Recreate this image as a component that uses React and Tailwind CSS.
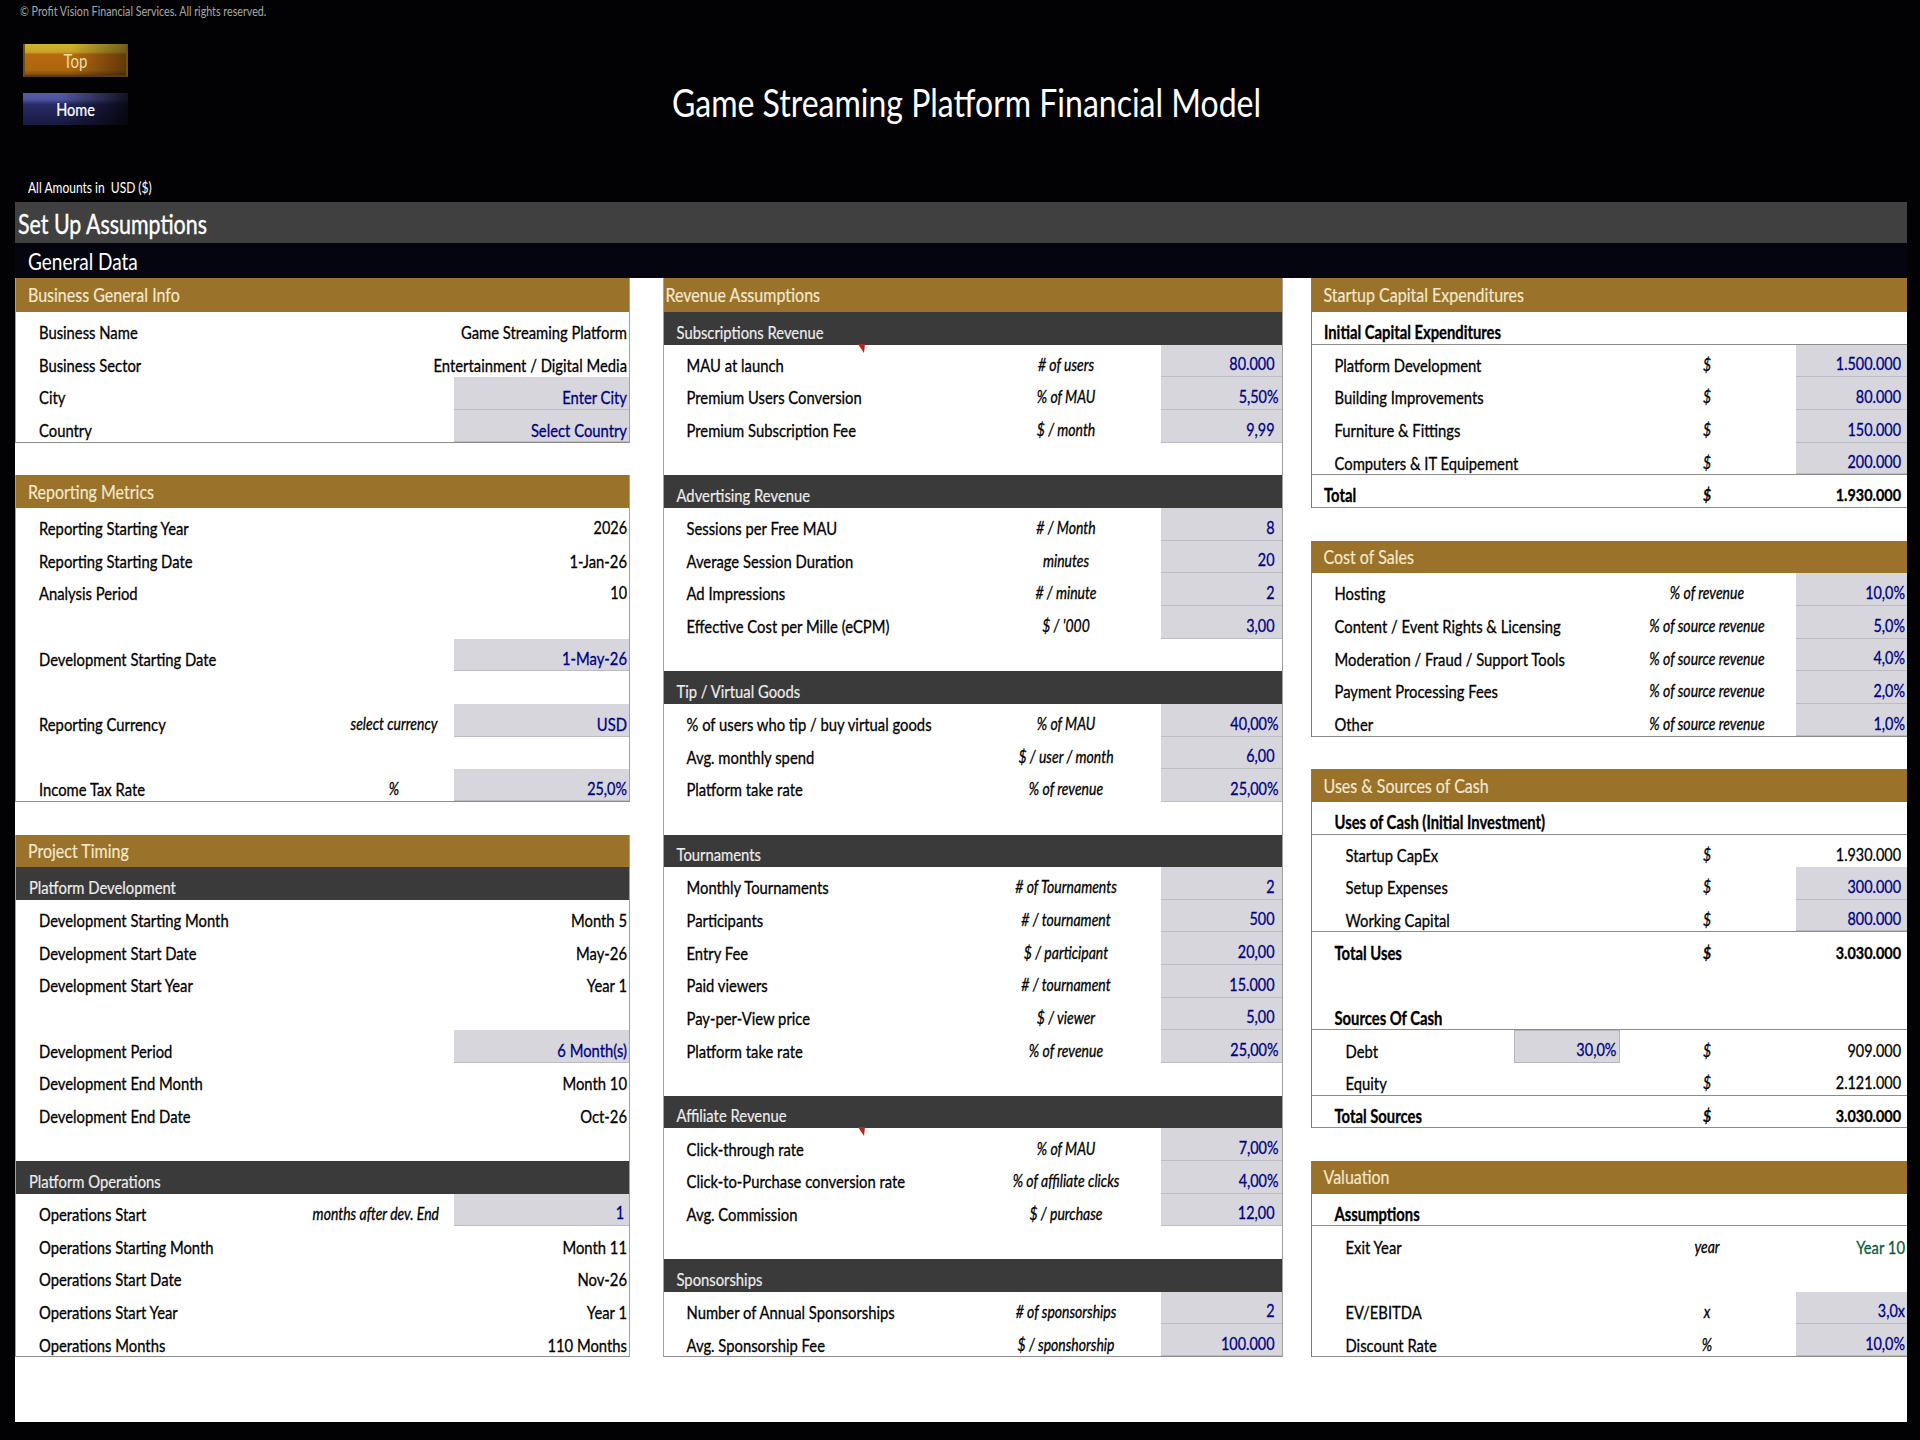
const FONT = "font-['Lato','Noto_Sans',sans-serif]";

const leftCols = { unit: "w-[90px] mr-[14.5px]", value: "w-[175.5px]", pad: "pr-[2px]", tight: "pr-[2px]" };
const midCols = { unit: "w-[100px] mr-[45px]", value: "w-[120.5px]", pad: "pr-[7px]", tight: "pr-[3px]" };
const rightCols = { unit: "w-[100px] mr-[38.5px]", value: "w-[111.5px]", pad: "pr-[6px]", tight: "pr-[2px]" };

const leftSections = [
  [
    { type: "gold", text: "Business General Info", first: true },
    { label: "Business Name", value: "Game Streaming Platform", tight: true },
    { label: "Business Sector", value: "Entertainment / Digital Media", tight: true },
    { label: "City", value: "Enter City", input: true },
    { label: "Country", value: "Select Country", input: true, line: true },
  ],
  [
    { type: "gold", text: "Reporting Metrics" },
    { label: "Reporting Starting Year", value: "2026" },
    { label: "Reporting Starting Date", value: "1-Jan-26" },
    { label: "Analysis Period", value: "10" },
    { type: "blank" },
    { label: "Development Starting Date", value: "1-May-26", input: true },
    { type: "blank" },
    { label: "Reporting Currency", unit: "select currency", value: "USD", input: true },
    { type: "blank" },
    { label: "Income Tax Rate", unit: "%", value: "25,0%", input: true, line: true },
  ],
  [
    { type: "gold", text: "Project Timing" },
    { type: "dark", text: "Platform Development" },
    { label: "Development Starting Month", value: "Month 5" },
    { label: "Development Start Date", value: "May-26" },
    { label: "Development Start Year", value: "Year 1" },
    { type: "blank" },
    { label: "Development Period", value: "6 Month(s)", input: true },
    { label: "Development End Month", value: "Month 10" },
    { label: "Development End Date", value: "Oct-26" },
    { type: "blank" },
    { type: "dark", text: "Platform Operations" },
    { label: "Operations Start", unit: "months after dev. End", unitEnd: true, value: "1", input: true, pad: "pr-[5px]" },
    { label: "Operations Starting Month", value: "Month 11" },
    { label: "Operations Start Date", value: "Nov-26" },
    { label: "Operations Start Year", value: "Year 1" },
    { label: "Operations Months", value: "110 Months", line: true },
  ],
];

const midSections = [
  [
    { type: "gold", text: "Revenue Assumptions", first: true, cls: "pl-[2px]" },
    { type: "dark", text: "Subscriptions Revenue" },
    { label: "MAU at launch", unit: "# of users", value: "80.000", input: true, comment: true },
    { label: "Premium Users Conversion", unit: "% of MAU", value: "5,50%", input: true },
    { label: "Premium Subscription Fee", unit: "$ / month", value: "9,99", input: true },
    { type: "blank" },
    { type: "dark", text: "Advertising Revenue" },
    { label: "Sessions per Free MAU", unit: "# / Month", value: "8", input: true },
    { label: "Average Session Duration", unit: "minutes", value: "20", input: true },
    { label: "Ad Impressions", unit: "# / minute", value: "2", input: true },
    { label: "Effective Cost per Mille (eCPM)", unit: "$ / '000", value: "3,00", input: true },
    { type: "blank" },
    { type: "dark", text: "Tip / Virtual Goods" },
    { label: "% of users who tip / buy virtual goods", unit: "% of MAU", value: "40,00%", input: true },
    { label: "Avg. monthly spend", unit: "$ / user / month", value: "6,00", input: true },
    { label: "Platform take rate", unit: "% of revenue", value: "25,00%", input: true },
    { type: "blank" },
    { type: "dark", text: "Tournaments" },
    { label: "Monthly Tournaments", unit: "# of Tournaments", value: "2", input: true },
    { label: "Participants", unit: "# / tournament", value: "500", input: true },
    { label: "Entry Fee", unit: "$ / participant", value: "20,00", input: true },
    { label: "Paid viewers", unit: "# / tournament", value: "15.000", input: true },
    { label: "Pay-per-View price", unit: "$ / viewer", value: "5,00", input: true },
    { label: "Platform take rate", unit: "% of revenue", value: "25,00%", input: true },
    { type: "blank" },
    { type: "dark", text: "Affiliate Revenue" },
    { label: "Click-through rate", unit: "% of MAU", value: "7,00%", input: true, comment: true },
    { label: "Click-to-Purchase conversion rate", unit: "% of affiliate clicks", value: "4,00%", input: true },
    { label: "Avg. Commission", unit: "$ / purchase", value: "12,00", input: true },
    { type: "blank" },
    { type: "dark", text: "Sponsorships" },
    { label: "Number of Annual Sponsorships", unit: "# of sponsorships", value: "2", input: true },
    { label: "Avg. Sponsorship Fee", unit: "$ / sponshorship", value: "100.000", input: true, line: true },
  ],
];

const rightSections = [
  [
    { type: "gold", text: "Startup Capital Expenditures", first: true },
    { label: "Initial Capital Expenditures", bold: true, labelCls: "pl-[12.5px]", line: true },
    { label: "Platform Development", unit: "$", value: "1.500.000", input: true },
    { label: "Building Improvements", unit: "$", value: "80.000", input: true },
    { label: "Furniture & Fittings", unit: "$", value: "150.000", input: true },
    { label: "Computers & IT Equipement", unit: "$", value: "200.000", input: true, line: true },
    { label: "Total", unit: "$", value: "1.930.000", bold: true, labelCls: "pl-[12.5px]", line: true },
  ],
  [
    { type: "gold", text: "Cost of Sales" },
    { label: "Hosting", unit: "% of revenue", value: "10,0%", input: true },
    { label: "Content / Event Rights & Licensing", unit: "% of source revenue", value: "5,0%", input: true },
    { label: "Moderation / Fraud / Support Tools", unit: "% of source revenue", value: "4,0%", input: true },
    { label: "Payment Processing Fees", unit: "% of source revenue", value: "2,0%", input: true },
    { label: "Other", unit: "% of source revenue", value: "1,0%", input: true, line: true },
  ],
  [
    { type: "gold", text: "Uses & Sources of Cash" },
    { label: "Uses of Cash (Initial Investment)", bold: true, line: true },
    { label: "Startup CapEx", unit: "$", value: "1.930.000", labelCls: "pl-[34px]" },
    { label: "Setup Expenses", unit: "$", value: "300.000", input: true, labelCls: "pl-[34px]" },
    { label: "Working Capital", unit: "$", value: "800.000", input: true, labelCls: "pl-[34px]", line: true },
    { label: "Total Uses", unit: "$", value: "3.030.000", bold: true },
    { type: "blank" },
    { label: "Sources Of Cash", bold: true, line: true },
    { label: "Debt", extra: "30,0%", unit: "$", value: "909.000", labelCls: "pl-[34px]" },
    { label: "Equity", unit: "$", value: "2.121.000", labelCls: "pl-[34px]", line: true },
    { label: "Total Sources", unit: "$", value: "3.030.000", bold: true, line: true },
  ],
  [
    { type: "gold", text: "Valuation" },
    { label: "Assumptions", bold: true, line: true },
    { label: "Exit Year", unit: "year", value: "Year 10", green: true, labelCls: "pl-[34px]", tight: true },
    { type: "blank" },
    { label: "EV/EBITDA", unit: "x", value: "3,0x", input: true, labelCls: "pl-[34px]" },
    { label: "Discount Rate", unit: "%", value: "10,0%", input: true, labelCls: "pl-[34px]", line: true },
  ],
];

// the source screenshot is stretched vertically, so text gets the same stretch
const Tall = ({ children, className = "" }) => (
  <span className={`inline-block scale-y-[1.22] whitespace-nowrap ${className}`}>{children}</span>
);

function Row({ row, cols }) {
  if (row.type === "blank") return <div className="h-[32.66px]" />;
  if (row.type === "gold") {
    return (
      <div className={`flex items-center bg-[#9a7229] text-[#f3e9cf] text-[16px] leading-[20px] [-webkit-text-stroke:0.15px_#f3e9cf] ${row.first ? "h-[34px]" : "h-[32.66px]"} ${row.cls || "pl-[12px]"}`}>
        <Tall>{row.text}</Tall>
      </div>
    );
  }
  if (row.type === "dark") {
    return (
      <div className="flex items-end pb-[3px] h-[32.66px] bg-[#3a3a3a] text-[#eeeeee] text-[14.8px] leading-[20px] pl-[13px] [-webkit-text-stroke:0.15px_#eeeeee]">
        <Tall>{row.text}</Tall>
      </div>
    );
  }
  const tight = row.tight || /[%x]$/.test(row.value || "");
  const pad = row.pad || (tight ? cols.tight : cols.pad);
  const weight = row.bold ? "font-bold" : "";
  const numeric = /^[\d.,%x]+$/.test(row.value || "");
  const labelPb = row.line ? "pb-[1.5px]" : "pb-[2.5px]";
  const valuePb = row.input ? (row.line ? "pb-[1px]" : "pb-[2px]") : labelPb;
  return (
    <div className={`relative flex h-[32.66px] text-black text-[14.8px] leading-[20px] [-webkit-text-stroke:0.25px_currentColor] ${row.line ? "border-b border-[#8c8c8c]" : ""}`}>
      {row.comment && (
        <svg className="absolute left-[194px] -top-[1px]" width="8" height="10" viewBox="0 0 8 10">
          <polygon points="0,0 7,0 6,9" fill="#b3261e" />
        </svg>
      )}
      <div className={`flex-1 min-w-0 flex items-end ${labelPb} ${weight} ${row.labelCls || "pl-[23px]"}`}>
        <Tall>{row.label}</Tall>
      </div>
      {row.extra && (
        <div className="w-[106px] mr-[37.5px] flex items-end justify-end pb-[2px] pr-[2px] bg-[#d6d6dc] border border-[#b5b5bb] text-[#000080] text-[14.5px]">
          <Tall>{row.extra}</Tall>
        </div>
      )}
      <div className={`${cols.unit} flex items-end ${labelPb} italic text-[14px] ${row.unitEnd ? "justify-end" : "justify-center"} ${weight}`}>
        <Tall>{row.unit}</Tall>
      </div>
      <div
        className={`${cols.value} flex items-end justify-end ${valuePb} ${pad} ${weight} ${numeric ? "text-[14.4px]" : ""} ${
          row.input ? "bg-[#d6d6dc] border-b border-[#bcbcc4] text-[#000080]" : row.green ? "text-[#0b5d3b]" : ""
        }`}
      >
        <Tall>{row.value}</Tall>
      </div>
    </div>
  );
}

function Column({ sections, cols, width, edge }) {
  return (
    <div className={`${width} flex flex-col`}>
      {sections.map((rows, i) => (
        <div key={i} className={`flex flex-col ${edge} ${i > 0 ? "mt-[32.66px]" : ""}`}>
          {rows.map((row, j) => (
            <Row key={j} row={row} cols={cols} />
          ))}
        </div>
      ))}
    </div>
  );
}

export default function App() {
  return (
    <div className={`${FONT} relative h-[1440px] bg-[#020204] pl-[15px] pr-[13px] overflow-hidden text-white`}>
      <div className="h-[202px] flex flex-col">
        <div className="h-[22px] pl-[5px] flex items-center text-[10.7px] text-[#a8a8a8]">
          <Tall>© Profit Vision Financial Services. All rights reserved.</Tall>
        </div>
        <div className="relative flex-1">
          <div className="flex flex-col pl-[8px] pt-[22px] gap-[16px]">
            <div className="w-[105px] h-[33px] flex items-center justify-center pt-[3px] text-[15px] text-[#eadfae] border-x-2 border-b-2 border-x-[#6b5214] border-b-[#5a3a10] bg-[linear-gradient(90deg,transparent_45%,rgba(0,0,0,0.45)_100%),linear-gradient(180deg,#d2b52e_0%,#c6a428_26%,#b8690f_34%,#ad650f_85%,#7a4a10_100%)]">
              <Tall>Top</Tall>
            </div>
            <div className="w-[105px] h-[32px] flex items-center justify-center pt-[2px] text-[14.5px] text-white [-webkit-text-stroke:0.2px_#fff] bg-[linear-gradient(90deg,transparent_35%,rgba(0,0,0,0.8)_100%),linear-gradient(180deg,#565ba8_0%,#50549f_20%,#282b66_36%,#181a40_100%)]">
              <Tall>Home</Tall>
            </div>
          </div>
          <h1 className="absolute left-[657px] top-[64px] text-[32px] leading-none font-normal whitespace-nowrap">
            <Tall>Game Streaming Platform Financial Model</Tall>
          </h1>
          <div className="absolute left-[13px] bottom-[8px] text-[12px] leading-none">
            <Tall>All Amounts in&nbsp; USD ($)</Tall>
          </div>
        </div>
      </div>
      <div className="h-[41px] flex items-center pt-[3px] bg-[#404040] pl-[3px] text-[21.4px] text-white [-webkit-text-stroke:0.3px_#fff]">
        <Tall>Set Up Assumptions</Tall>
      </div>
      <div className="h-[35px] flex items-center pt-[3px] bg-[#04050e] pl-[13px] text-[19px] text-white">
        <Tall>General Data</Tall>
      </div>
      <div className="flex h-[1144px] bg-white">
        <Column sections={leftSections} cols={leftCols} width="w-[615px] mr-[32.5px]" edge="border-x border-[#a0a0a0]" />
        <Column sections={midSections} cols={midCols} width="w-[620px] mr-[28px]" edge="border-x border-[#a0a0a0]" />
        <Column sections={rightSections} cols={rightCols} width="w-[596.5px]" edge="border-l border-[#7a7a7a]" />
      </div>
    </div>
  );
}
